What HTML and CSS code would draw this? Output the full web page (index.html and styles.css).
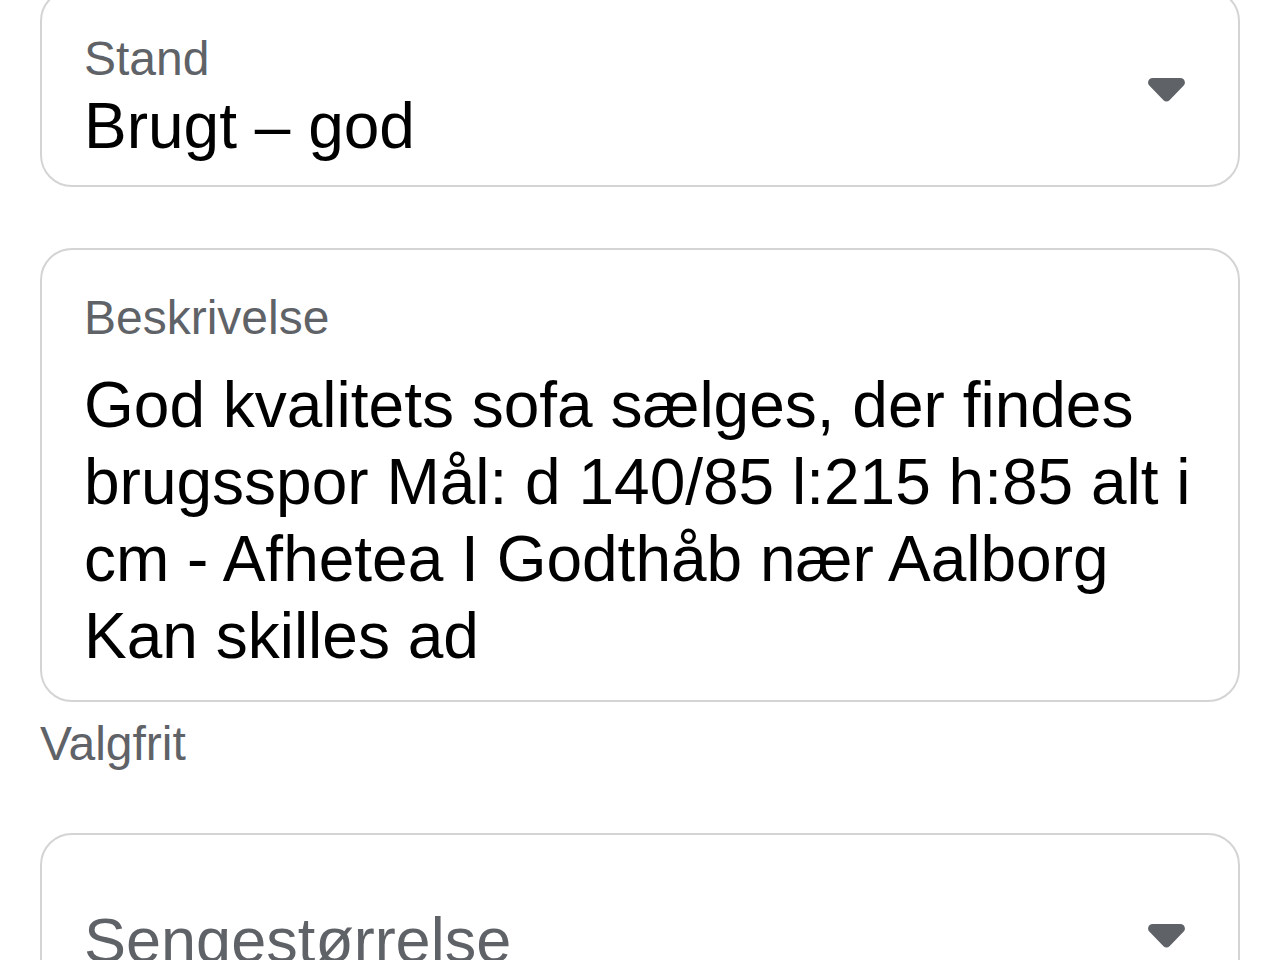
FILE: index.html
```html
<!DOCTYPE html>
<html lang="da">
<head>
<meta charset="utf-8">
<title>Annonce</title>
<link rel="stylesheet" href="styles.css">
</head>
<body>
<main class="form">
  <div class="field field-select field-first">
    <div class="field-text">
      <div class="label">Stand</div>
      <div class="value">Brugt – god</div>
    </div>
    <svg class="chevron chevron-first" viewBox="0 0 37 24" width="37" height="24" aria-hidden="true">
      <path d="M5 0 H32 C36.5 0 38.5 4.5 35.5 7.8 L21.5 22.2 C19.8 24 17.2 24 15.5 22.2 L1.5 7.8 C-1.5 4.5 0.5 0 5 0 Z" fill="#5f6368"/>
    </svg>
  </div>

  <div class="group">
    <div class="field field-area">
      <div class="field-text">
        <div class="label">Beskrivelse</div>
        <div class="value value-area">God kvalitets sofa sælges, der findes<br>brugsspor Mål: d 140/85 l:215 h:85 alt i<br>cm - Afhetea I Godthåb nær Aalborg<br>Kan skilles ad</div>
      </div>
    </div>
    <div class="helper">Valgfrit</div>
  </div>

  <div class="field field-select field-empty">
    <div class="field-text">
      <div class="placeholder">Sengestørrelse</div>
    </div>
    <svg class="chevron chevron-empty" viewBox="0 0 37 24" width="37" height="24" aria-hidden="true">
      <path d="M5 0 H32 C36.5 0 38.5 4.5 35.5 7.8 L21.5 22.2 C19.8 24 17.2 24 15.5 22.2 L1.5 7.8 C-1.5 4.5 0.5 0 5 0 Z" fill="#5f6368"/>
    </svg>
  </div>
</main>
</body>
</html>
```
FILE: styles.css
```css
html, body {
  margin: 0;
  padding: 0;
  background: #ffffff;
  overflow: hidden;
}

body {
  font-family: "Liberation Sans", Arial, Helvetica, sans-serif;
  color: #000000;
  height: 960px;
}

.form {
  display: flex;
  flex-direction: column;
  padding: 0 40px;
  margin-top: -11px;
}

.field {
  display: flex;
  align-items: flex-start;
  border: 2px solid #d4d4d4;
  border-radius: 32px;
  padding: 0 40px 0 42px;
  background: #ffffff;
}

.field-text {
  flex: 1;
  min-width: 0;
}

.field-first {
  padding-top: 39px;
  padding-bottom: 20px;
}

.field-area {
  padding-top: 39px;
  padding-bottom: 25px;
}

.field-empty {
  padding-top: 67px;
  padding-bottom: 60px;
  margin-top: 60px;
}

.group {
  margin-top: 61px;
}

.label {
  font-size: 48px;
  line-height: 57.6px;
  color: #5f6368;
}

.value {
  font-size: 64px;
  line-height: 77px;
  color: #000000;
}

.value-area {
  margin-top: 21px;
}

.placeholder {
  font-size: 63px;
  line-height: 77px;
  color: #5f6368;
}

.helper {
  font-size: 48px;
  line-height: 57.6px;
  color: #5f6368;
  margin-top: 13px;
}

.chevron {
  flex: none;
  margin-right: 13px;
}

.chevron-first {
  margin-top: 48px;
}

.chevron-empty {
  margin-top: 22px;
}
```
